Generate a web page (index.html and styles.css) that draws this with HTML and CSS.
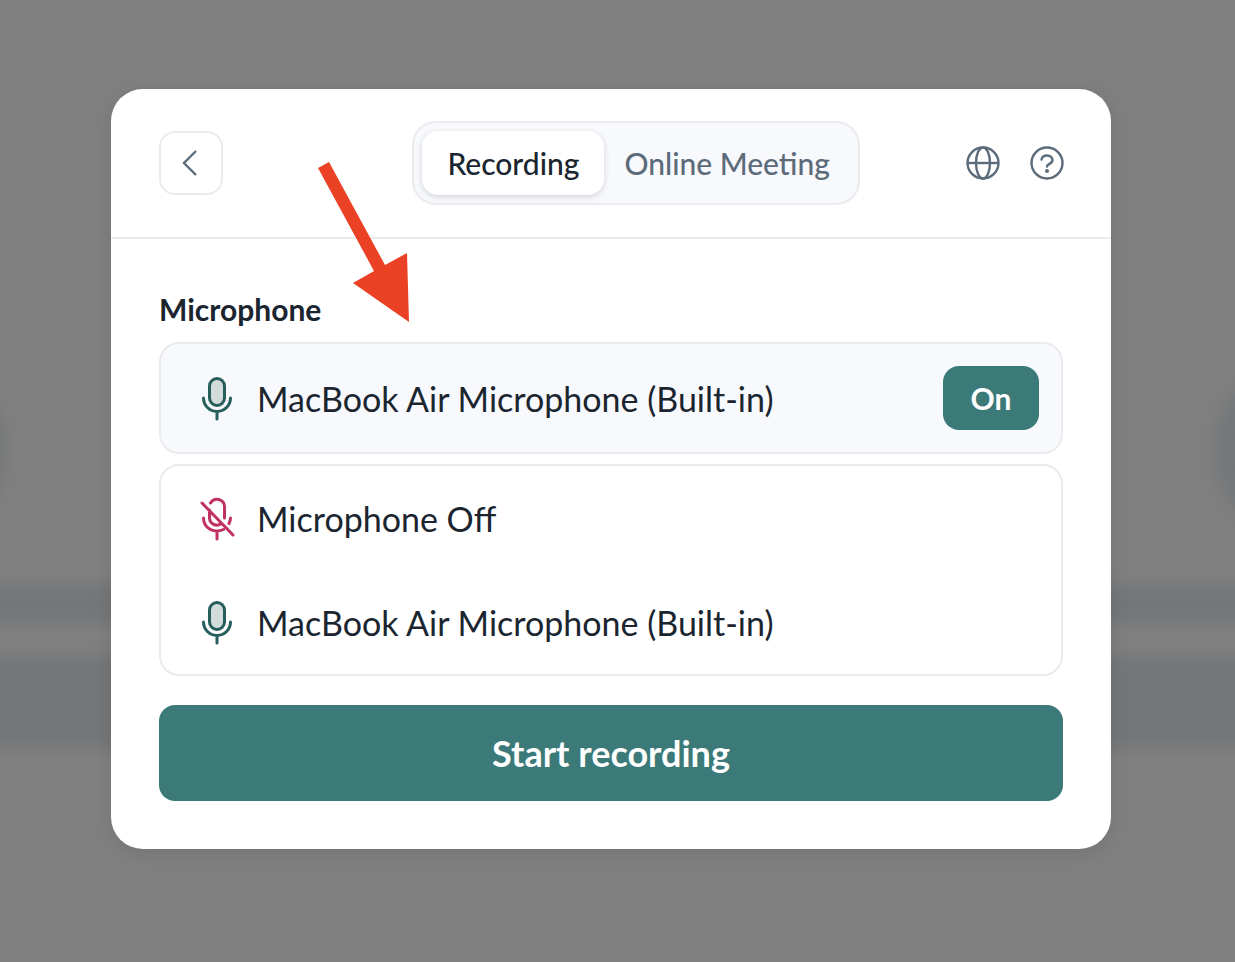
FILE: index.html
```html
<!DOCTYPE html>
<html lang="en">

<head>
    <meta charset="UTF-8">
    <meta name="viewport" content="width=device-width, initial-scale=1.0">
    <title>Recording</title>
    <link rel="stylesheet" href="styles.css">
</head>

<body>
    <!-- blurred page behind the dialog -->
    <div class="backdrop" aria-hidden="true">
        <div class="circles">
            <span class="circle"></span>
            <span class="circle"></span>
        </div>
        <div class="bar"></div>
        <div class="bar bar-large"></div>
    </div>

    <main class="dialog">
        <header class="header">
            <button class="back" type="button" aria-label="Back">
                <svg width="32" height="32" viewBox="0 0 32 32"><path d="M21 4 9 16l12 12"/></svg>
            </button>
            <nav class="tabs">
                <button class="tab active" type="button">Recording</button>
                <button class="tab" type="button">Online Meeting</button>
            </nav>
            <button class="icon-button" type="button" aria-label="Language">
                <svg width="34" height="34" viewBox="0 0 34 34">
                    <circle cx="17" cy="17" r="15.500"/>
                    <ellipse cx="17" cy="17" rx="7" ry="15.500"/>
                    <path d="M2 17h30"/>
                </svg>
            </button>
            <button class="icon-button" type="button" aria-label="Help">
                <svg width="34" height="34" viewBox="0 0 34 34">
                    <circle cx="17" cy="17" r="15.500"/>
                    <path d="M11.500 13.500c.5-2.500 2.500-4 5.500-4s5.500 1.800 5.500 4.700c0 3.600-5.500 3.600-5.500 6.300" stroke-linecap="round"/>
                    <circle class="dot" cx="17" cy="25" r="2"/>
                </svg>
            </button>
        </header>

        <section class="content">
            <h2 class="label" id="mic-label">Microphone</h2>
            <div class="selected">
                <button class="device" type="button" aria-labelledby="mic-label mic-name">
                    <svg class="mic" width="48" height="48" viewBox="0 0 48 48">
                        <rect x="16.500" y="4.500" width="15" height="27" rx="7.500"/>
                        <path d="M10.500 24a13.500 13.500 0 0 0 27 0M24 38v7"/>
                    </svg>
                    <span id="mic-name">MacBook Air Microphone (Built-in)</span>
                </button>
                <button class="toggle" type="button">On</button>
            </div>

            <ul class="options">
                <li>
                    <button class="device" type="button">
                        <svg class="mic mic-off" width="48" height="48" viewBox="0 0 48 48">
                            <path d="M17.500 9a7.500 7.500 0 0 1 14 3.500V24M16.500 16v8c0 5.500 6 8.800 11 6.200M10.500 24c0 10 10.500 16 20 11.500M37.500 24c0 2-.5 3.500-1.500 5.500M24 38v7M9 9l31 32"/>
                        </svg>
                        <span>Microphone Off</span>
                    </button>
                </li>
                <li>
                    <button class="device" type="button">
                        <svg class="mic" width="48" height="48" viewBox="0 0 48 48">
                            <rect x="16.500" y="4.500" width="15" height="27" rx="7.500"/>
                            <path d="M10.500 24a13.500 13.500 0 0 0 27 0M24 38v7"/>
                        </svg>
                        <span>MacBook Air Microphone (Built-in)</span>
                    </button>
                </li>
            </ul>

            <button class="start" type="button">Start recording</button>
        </section>

        <!-- pointer to the microphone field -->
        <svg class="arrow" width="92" height="162" viewBox="0 0 92 162" aria-hidden="true">
            <path d="M0 7 11 1 67 104 89 92 91 161 35 122 56 110z"/>
        </svg>
    </main>
</body>

</html>
```
FILE: styles.css
```css
* {
    box-sizing: border-box;
}
body {
    margin: 0;
    min-height: 100vh;
    padding: 89px 124px 113px 111px;
    background: #808080;
    color: #1b2530;
    font-family: Lato, "Liberation Sans", sans-serif;
}
button {
    margin: 0;
    padding: 0;
    border: 0;
    background: none;
    color: inherit;
    font: inherit;
    cursor: pointer;
}
svg {
    display: block;
    flex-shrink: 0;
    fill: none;
    stroke: #5c6b7a;
    stroke-width: 2.4;
}

/* backdrop */
.backdrop {
    position: absolute;
    inset: 0;
    overflow: hidden;
    padding-top: 364px;
}
.circles {
    display: flex;
    justify-content: space-between;
    margin: 0 -150px 0 -166px;
}
.circle {
    width: 172px;
    height: 172px;
    border-radius: 50%;
    background: #747678;
    filter: blur(9px);
}
.bar {
    height: 38px;
    margin: 49px -40px 0;
    background: #747678;
    filter: blur(7px);
}
.bar-large {
    height: 94px;
    margin-top: 32px;
}

/* dialog */
.dialog {
    position: relative;
    border-radius: 32px;
    background: #fff;
    box-shadow: 0 4px 20px rgba(0, 0, 0, .1);
}
.header {
    display: flex;
    align-items: center;
    padding: 32px 32px 32px 48px;
    border-bottom: 2px solid #eaebec;
}
.back {
    display: grid;
    place-items: center;
    width: 64px;
    height: 64px;
    border: 2px solid #eaebec;
    border-radius: 16px;
}
.tabs {
    display: flex;
    margin: 0 91px 0 auto;
    padding: 8px;
    border: 2px solid #eaebec;
    border-radius: 24px;
    background: #f8f9fd;
    font-size: 30px;
    font-weight: 500;
}
.tab {
    height: 64px;
    padding: 0 20px;
    border-radius: 16px;
    color: #5c6b7a;
}
.tab.active {
    padding: 0 25px;
    background: #fff;
    box-shadow: 0 2px 6px rgba(0, 0, 0, .15);
    color: #1b2530;
}
.icon-button {
    display: grid;
    place-items: center;
    width: 64px;
    height: 64px;
}
.dot {
    fill: #5c6b7a;
    stroke: none;
}

.content {
    padding: 48px;
}
.label {
    margin: 0 0 10px;
    font-size: 30px;
    font-weight: 700;
    line-height: 45px;
}
.selected {
    display: flex;
    align-items: center;
    padding-right: 22px;
    border: 2px solid #eaebec;
    border-radius: 20px;
    background: #f8f9fd;
}
.selected .device {
    height: 108px;
}
.device {
    display: flex;
    flex: 1;
    align-items: center;
    gap: 16px;
    width: 100%;
    height: 104px;
    padding: 0 32px;
    font-size: 34px;
    text-align: left;
}
.mic {
    stroke: #275e5b;
    stroke-width: 3;
    stroke-linecap: round;
}
.mic rect {
    fill: #d2dcdd;
}
.mic-off {
    stroke: #c0325f;
}
.toggle {
    width: 96px;
    height: 64px;
    border-radius: 16px;
    background: #3b7a78;
    color: #fff;
    font-size: 30px;
    font-weight: 700;
}
.options {
    margin: 10px 0 29px;
    padding: 0;
    border: 2px solid #eaebec;
    border-radius: 20px;
    list-style: none;
}
.start {
    width: 100%;
    height: 96px;
    border-radius: 16px;
    background: #3b7a78;
    color: #fff;
    font-size: 36px;
    font-weight: 700;
}

.arrow {
    position: absolute;
    top: 72px;
    left: 207px;
}
.arrow path {
    fill: #eb4226;
    stroke: none;
}
```
